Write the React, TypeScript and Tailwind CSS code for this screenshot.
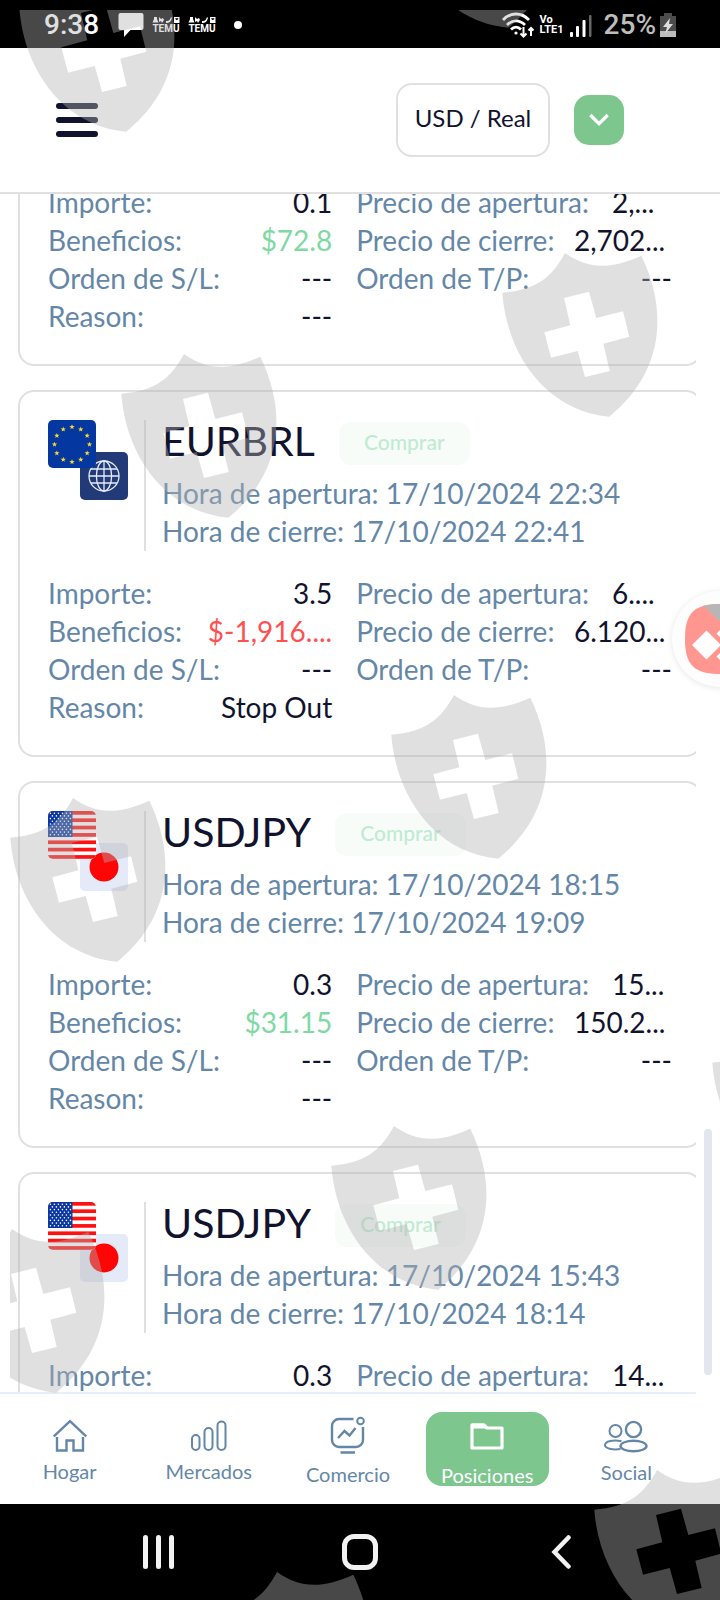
import type { ReactNode } from "react";

type Field = { label: string; value: string; tone?: "up" | "down"; box?: string };
type Position = {
  symbol?: string;
  flags?: ReactNode;
  opened?: string;
  closed?: string;
  left: Field[];
  right: Field[];
};

const tones = { up: "text-[#7ed9a3]", down: "text-[#ff5050]" };
const APERTURA = "w-[60px]";
const CIERRE = "w-[98px]";

const starPoints = "0,-2.8 0.7,-0.9 2.7,-0.9 1.1,0.3 1.6,2.2 0,1.1 -1.6,2.2 -1.1,0.3 -2.7,-0.9 -0.7,-0.9";

function EuroFlag() {
  return (
    <svg viewBox="0 0 48 48" className="size-12 rounded-[5px]" aria-hidden="true">
      <rect width="48" height="48" fill="#0437a0" />
      {Array.from({ length: 12 }, (_, i) => {
        const a = (i * Math.PI) / 6;
        return (
          <polygon
            key={i}
            points={starPoints}
            fill="#ffda2c"
            transform={`translate(${24 + 17.5 * Math.sin(a)} ${24.5 - 17.5 * Math.cos(a)})`}
          />
        );
      })}
    </svg>
  );
}

function GlobeFlag() {
  return (
    <svg viewBox="0 0 48 48" className="size-12 rounded-[5px]" aria-hidden="true">
      <rect width="48" height="48" fill="#223a78" />
      <g fill="none" stroke="#e6ecfa" strokeWidth="1.3">
        <circle cx="24" cy="24" r="15" />
        <ellipse cx="24" cy="24" rx="7.6" ry="15" />
        <path d="M24 9v30M9 24h30M11 17h26M11 31h26" />
      </g>
    </svg>
  );
}

function UsFlag() {
  return (
    <svg viewBox="0 0 48 48" className="size-12 rounded-[5px]" aria-hidden="true">
      <rect width="48" height="48" fill="#fff" />
      {Array.from({ length: 7 }, (_, i) => (
        <rect key={i} y={i * 7.35} width="48" height="3.7" fill="#ff1111" />
      ))}
      <rect width="24.5" height="26" fill="#0a37a0" />
      {Array.from({ length: 9 }, (_, r) =>
        Array.from({ length: r % 2 ? 5 : 6 }, (_, c) => (
          <circle key={`${r}-${c}`} cx={2.4 + c * 4 + (r % 2 ? 2 : 0)} cy={2.2 + r * 2.7} r="0.8" fill="#fff" />
        )),
      )}
    </svg>
  );
}

function JapanFlag() {
  return (
    <svg viewBox="0 0 48 48" className="size-12 rounded-[5px]" aria-hidden="true">
      <rect width="48" height="48" fill="#e4eaf7" />
      <circle cx="24" cy="24" r="14.5" fill="#ff0606" />
    </svg>
  );
}

function FlagPair({ front, back }: { front: ReactNode; back: ReactNode }) {
  return (
    <div className="relative size-20 shrink-0">
      <div className="absolute right-0 bottom-0">{back}</div>
      <div className="absolute top-0 left-0">{front}</div>
    </div>
  );
}

const usdJpy = <FlagPair front={<UsFlag />} back={<JapanFlag />} />;

const positions: Position[] = [
  {
    left: [
      { label: "Importe:", value: "0.1" },
      { label: "Beneficios:", value: "$72.8", tone: "up" },
      { label: "Orden de S/L:", value: "---" },
      { label: "Reason:", value: "---" },
    ],
    right: [
      { label: "Precio de apertura:", value: "2,...", box: APERTURA },
      { label: "Precio de cierre:", value: "2,702...", box: CIERRE },
      { label: "Orden de T/P:", value: "---" },
    ],
  },
  {
    symbol: "EURBRL",
    flags: <FlagPair front={<EuroFlag />} back={<GlobeFlag />} />,
    opened: "17/10/2024 22:34",
    closed: "17/10/2024 22:41",
    left: [
      { label: "Importe:", value: "3.5" },
      { label: "Beneficios:", value: "$-1,916....", tone: "down" },
      { label: "Orden de S/L:", value: "---" },
      { label: "Reason:", value: "Stop Out" },
    ],
    right: [
      { label: "Precio de apertura:", value: "6....", box: APERTURA },
      { label: "Precio de cierre:", value: "6.120...", box: CIERRE },
      { label: "Orden de T/P:", value: "---" },
    ],
  },
  {
    symbol: "USDJPY",
    flags: usdJpy,
    opened: "17/10/2024 18:15",
    closed: "17/10/2024 19:09",
    left: [
      { label: "Importe:", value: "0.3" },
      { label: "Beneficios:", value: "$31.15", tone: "up" },
      { label: "Orden de S/L:", value: "---" },
      { label: "Reason:", value: "---" },
    ],
    right: [
      { label: "Precio de apertura:", value: "15...", box: APERTURA },
      { label: "Precio de cierre:", value: "150.2...", box: CIERRE },
      { label: "Orden de T/P:", value: "---" },
    ],
  },
  {
    symbol: "USDJPY",
    flags: usdJpy,
    opened: "17/10/2024 15:43",
    closed: "17/10/2024 18:14",
    left: [{ label: "Importe:", value: "0.3" }],
    right: [{ label: "Precio de apertura:", value: "14...", box: APERTURA }],
  },
];

function Fields({ items }: { items: Field[] }) {
  return (
    <dl className="min-w-0">
      {items.map((f) => (
        <div key={f.label} className="flex justify-between whitespace-nowrap">
          <dt className="text-[#6487a8]">{f.label}</dt>
          <dd className={`${f.box ?? ""} ${f.tone ? tones[f.tone] : "text-[#11132e]"}`}>{f.value}</dd>
        </div>
      ))}
    </dl>
  );
}

function PositionCard({ p }: { p: Position }) {
  return (
    <article
      className={`shrink-0 border-2 border-[#e0e0e0] px-7 pb-[29px] text-[28px] leading-[38px] ${
        p.symbol ? "rounded-2xl pt-7" : "-mt-[11px] rounded-b-2xl border-t-0"
      }`}
    >
      {p.symbol && (
        <header className="mb-[23px] flex gap-4">
          {p.flags}
          <div className="h-[131px] border-l-2 border-[#e0e0e0] pl-4 text-[#6487a8]">
            <div className="mb-2 flex h-[46px] items-center gap-6">
              <h2 className="pb-1 text-[41px] leading-[42px] text-[#11132e]">{p.symbol}</h2>
              <span className="flex h-[43px] w-[131px] items-center justify-center rounded-xl bg-[#f7fcf9] pb-[2px] text-[21px] font-medium text-[#bfebd2]">
                Comprar
              </span>
            </div>
            <p>Hora de apertura: {p.opened}</p>
            <p>Hora de cierre: {p.closed}</p>
          </div>
        </header>
      )}
      <div className="grid grid-cols-[9fr_10fr] gap-6">
        <Fields items={p.left} />
        <Fields items={p.right} />
      </div>
    </article>
  );
}

function Temu() {
  return (
    <span className="flex w-7 flex-col items-center gap-[2px]">
      <svg viewBox="0 0 28 6" className="h-[6px] w-7" fill="#fff" aria-hidden="true">
        <path d="M2 0h3v2l1.5 3.5H.5L2 2zM7 0l2 2 2-1 1 2-2 3-1-2-2 1zM14 4c3 .5 4-1 5-4l1 1c-1 3-2 5-6 5zM22 0h5.500v6H22zm1.300 1.300v.7l1.500 1.300 1.500-1.300v-.7z" />
      </svg>
      <span className="text-[10px] leading-[8px] font-bold">TEMU</span>
    </span>
  );
}

function StatusBar() {
  return (
    <div className="flex h-12 shrink-0 items-center bg-black px-11 pt-[2px] font-[Roboto,sans-serif] text-white">
      <span className="w-[74px] text-[28px] leading-8 font-medium">9:38</span>
      <svg viewBox="0 0 26 26" className="mr-2 size-[26px]" fill="#fff" aria-hidden="true">
        <path d="M2.500 1h21a2 2 0 0 1 2 2v13a2 2 0 0 1-2 2h-11L6 25v-7H2.500a2 2 0 0 1-2-2V3a2 2 0 0 1 2-2z" />
      </svg>
      <div className="flex items-center gap-2">
        <Temu />
        <Temu />
      </div>
      <span className="ml-[18px] size-2 rounded-full bg-white" />
      <div className="ml-auto flex items-center">
        <svg viewBox="0 0 34 26" className="mr-1 h-[26px] w-[34px]" fill="none" stroke="#fff" strokeWidth="2.800" aria-hidden="true">
          <path d="M1 8c7.500-8 18.500-8 26 0M5 13c5.500-5.500 12.500-5.500 18 0M9 17.500c3-3 7-3 10 0" />
          <circle cx="14" cy="21" r="1.600" fill="#fff" stroke="none" />
          <path d="M21.500 15v9M18.500 21.500l3 3 3-3M29 24v-8M26.500 18.500l2.500-2.500 2.500 2.500" strokeWidth="2" />
        </svg>
        <span className="mr-[6px] text-[11px] leading-[10px] font-bold">
          Vo
          <br />
          LTE1
        </span>
        <svg viewBox="0 0 22 24" className="mr-3 h-6 w-[22px]" fill="#fff" aria-hidden="true">
          <rect x="0" y="19" width="3" height="5" rx="1" />
          <rect x="6" y="13" width="3" height="11" rx="1" />
          <rect x="12.500" y="7" width="3" height="17" rx="1" />
          <rect x="19" y="2" width="2.500" height="22" rx="1" fill="#666" />
        </svg>
        <span className="mr-1 text-[28px] leading-8 font-medium text-[#bdbdbd]">25%</span>
        <svg viewBox="0 0 16 24" className="h-6 w-4" aria-hidden="true">
          <path d="M4 0h8v3h4v15H0V3h4z" fill="#4c4c4c" />
          <path d="M0 18h16v6H0z" fill="#bdbdbd" />
          <path d="M10 5l-7 9h4l-2 7 8-10H9z" fill="#ddd" />
        </svg>
      </div>
    </div>
  );
}

const navStroke = { fill: "none", stroke: "#6487a8", strokeWidth: 2 };

const navItems: { label: string; icon: ReactNode; active?: boolean; pad: string }[] = [
  {
    label: "Hogar",
    pad: "pt-[25px] gap-[5px]",
    icon: (
      <svg viewBox="0 0 34 34" className="size-[34px]" {...navStroke} aria-hidden="true">
        <path d="M.8 17.500L17 2.200l16.200 15.300" strokeWidth="2.400" />
        <path d="M4 18v13.500h9.500V21.500h7v10H30V18" strokeWidth="2.400" />
      </svg>
    ),
  },
  {
    label: "Mercados",
    pad: "pt-[25px] gap-[5px]",
    icon: (
      <svg viewBox="0 0 36 34" className="h-[34px] w-9" {...navStroke} aria-hidden="true">
        <rect x="1" y="16" width="7.500" height="15" rx="3.700" />
        <rect x="13.500" y="9" width="8" height="22" rx="4" />
        <rect x="26.500" y="2.500" width="8" height="28.500" rx="4" />
      </svg>
    ),
  },
  {
    label: "Comercio",
    pad: "pt-[22px] gap-[5px]",
    icon: (
      <svg viewBox="0 0 36 40" className="h-10 w-9" {...navStroke} aria-hidden="true">
        <path d="M23.500 3H9a7 7 0 0 0-7 7v14a7 7 0 0 0 7 7h17a7 7 0 0 0 7-7V11M10.500 36.500H25" strokeWidth="2.400" />
        <circle cx="30.500" cy="5" r="3.300" />
        <path d="M8 22l6.500-7 5 4.500 6-7.500" strokeWidth="2.400" />
      </svg>
    ),
  },
  {
    label: "Posiciones",
    active: true,
    pad: "mx-2 mt-[18px] pt-[9px] gap-[11px]",
    icon: (
      <svg viewBox="0 0 34 30" className="h-[30px] w-[34px] shrink-0" fill="none" stroke="#fff" strokeWidth="3.200" strokeLinejoin="round" aria-hidden="true">
        <path d="M2 4V27h30V7H17l-3-3z" />
        <path d="M2 6.500h14L13.500 3.500H2z" fill="#fff" strokeWidth="2" />
      </svg>
    ),
  },
  {
    label: "Social",
    pad: "pt-[25px] gap-[6px]",
    icon: (
      <svg viewBox="0 0 44 34" className="h-[34px] w-11" {...navStroke} aria-hidden="true">
        <circle cx="11.500" cy="12" r="6" />
        <circle cx="29.500" cy="10.500" r="7.600" strokeWidth="2.400" />
        <path d="M17.500 22.300c-8-2-16.500 0-16.500 4 0 3 7 4.800 15.500 3.800" />
        <ellipse cx="29.500" cy="27" rx="13" ry="5.300" strokeWidth="2.400" />
      </svg>
    ),
  },
];

const shields: [number, number][] = [
  [82, -32],
  [464, -136],
  [565, 253],
  [184, 354],
  [454, 695],
  [73, 798],
  [775, 1023],
  [394, 1126],
  [12, 1229],
  [657, 1470],
  [277, 1572],
];

const shieldPath =
  "M0 0C22 15 42 18 76.300 2.700C105 62 96 122 44.300 163.700C-18 158-58 103-62.700 39.700C-30 37-14 26 0 0Z" +
  "M-1 45L5.300 72.300L-20.700 79.300L-14 104.700L12.700 98L20 124L44.700 118L38.300 90.700L64.300 83.700L58 58.300L31.300 65L24 38.700Z";

function ShieldOverlay() {
  return (
    <svg className="pointer-events-none absolute inset-0 size-full" aria-hidden="true">
      <clipPath id="shield-area">
        <rect x="10" y="10" width="100%" height="100%" />
      </clipPath>
      <g clipPath="url(#shield-area)" fill="#b2b2b2" fillOpacity="0.404" fillRule="evenodd">
        {shields.map(([x, y]) => (
          <path key={`${x}-${y}`} d={shieldPath} transform={`translate(${x} ${y})`} />
        ))}
      </g>
    </svg>
  );
}

export default function App() {
  return (
    <div className="relative flex h-screen flex-col overflow-hidden bg-white font-[Lato,'Open_Sans',sans-serif]">
      <StatusBar />

      <header className="flex h-[146px] shrink-0 items-center border-b-2 border-[#e0e0e0] pr-24 pl-14">
        <button aria-label="Menú" className="flex w-[42px] flex-col gap-2">
          <span className="h-[6px] rounded-full bg-[#11132e]" />
          <span className="h-[6px] rounded-full bg-[#11132e]" />
          <span className="h-[6px] rounded-full bg-[#11132e]" />
        </button>
        <button className="ml-auto h-[74px] w-[154px] rounded-2xl border-2 border-[#e0e0e0] pb-1 text-[24px] text-[#11132e]">
          USD / Real
        </button>
        <button aria-label="Abrir cuentas" className="ml-6 flex size-[50px] items-center justify-center rounded-[15px] bg-[#7dc78f]">
          <svg viewBox="0 0 20 14" className="h-[14px] w-5" fill="none" stroke="#fff" strokeWidth="3.200" aria-hidden="true">
            <path d="M1.300 2L10 10.700 18.700 2" />
          </svg>
        </button>
      </header>

      <div className="flex min-h-0 flex-1">
        <div className="flex min-w-0 flex-1 flex-col">
          <main className="min-h-0 flex-1 overflow-hidden pl-[18px]">
            <div className="-mr-[6px] flex flex-col gap-6">
              {positions.map((p, i) => (
                <PositionCard key={i} p={p} />
              ))}
            </div>
          </main>
          <nav className="grid h-28 shrink-0 grid-cols-5 border-t-2 border-[#e8eef7] bg-white">
            {navItems.map((n) => (
              <a
                key={n.label}
                href={`#${n.label.toLowerCase()}`}
                className={`flex flex-col items-center text-[20px] leading-[26px] ${n.pad} ${
                  n.active ? "h-[74px] rounded-2xl bg-[#7dc78f] text-white" : "text-[#6487a8]"
                }`}
              >
                {n.icon}
                {n.label}
              </a>
            ))}
          </nav>
        </div>
        <div className="flex w-6 shrink-0 flex-col items-center justify-end pb-[129px]">
          <div className="h-[246px] w-2 rounded-full bg-[#e2e6ef]" />
        </div>
      </div>

      <div className="grid h-24 shrink-0 grid-cols-3 items-center bg-black px-[58px] text-[#f2f2f2]">
        <button aria-label="Recientes" className="flex justify-center gap-2">
          <span className="h-[34px] w-[5px] rounded-full bg-current" />
          <span className="h-[34px] w-[5px] rounded-full bg-current" />
          <span className="h-[34px] w-[5px] rounded-full bg-current" />
        </button>
        <button aria-label="Inicio" className="flex justify-center">
          <span className="size-9 rounded-xl border-[5px] border-current" />
        </button>
        <button aria-label="Atrás" className="flex justify-center">
          <svg viewBox="0 0 20 34" className="h-[34px] w-5" fill="none" stroke="currentColor" strokeWidth="4.500" strokeLinecap="round" aria-hidden="true">
            <path d="M17.500 2.500L3.500 17l14 14.500" />
          </svg>
        </button>
      </div>

      <button
        aria-label="Asistente"
        className="absolute top-[591px] -right-12 flex size-24 items-center justify-center rounded-full bg-[#fdfdfd] shadow-[0_1px_6px_rgba(0,0,0,0.1)]"
      >
        <svg viewBox="0 0 70 70" className="size-[70px]" aria-hidden="true">
          <clipPath id="assistant-shape">
            <path d="M35 0C61 0 70 9 70 35S61 70 35 70 0 61 0 35 9 0 35 0Z" />
          </clipPath>
          <g clipPath="url(#assistant-shape)">
            <rect width="70" height="70" fill="#ff9790" />
            <path d="M17 0h53v52z" fill="#b6b6b6" />
            <path d="M21.500 26.500L36 41 21.500 55.500 7 41zM42 19l10.500 10.500L42 40 31.500 29.500zM42 42l10.500 10.500L42 63 31.500 52.500z" fill="#fff" />
          </g>
        </svg>
      </button>

      <ShieldOverlay />
    </div>
  );
}
